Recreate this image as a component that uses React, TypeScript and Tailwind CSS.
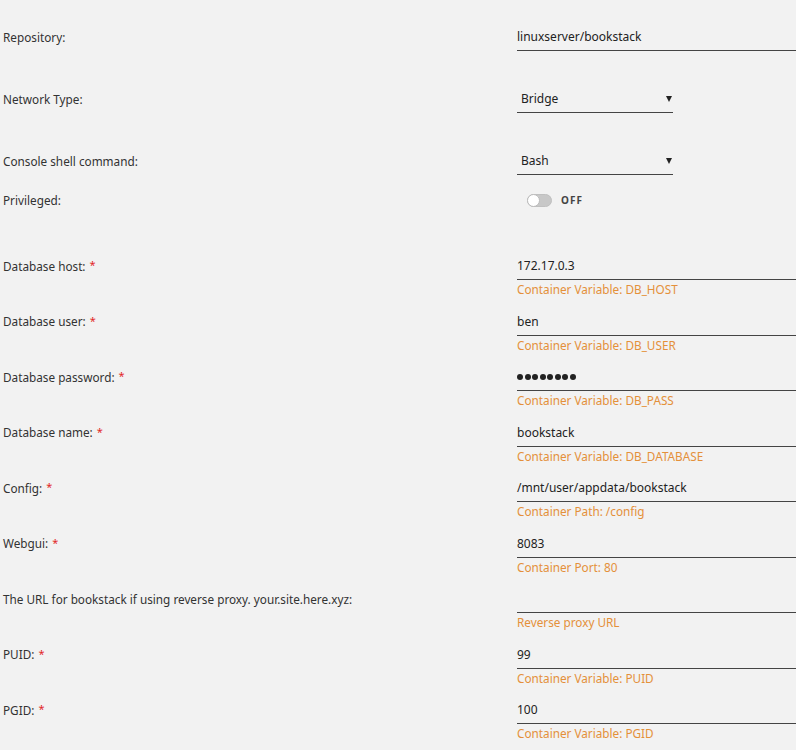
import React from "react";

type Field = {
  label: string;
  required?: boolean;
  value: string;
  hint: string;
  password?: boolean;
};

const fields: Field[] = [
  { label: "Database host:", required: true, value: "172.17.0.3", hint: "Container Variable: DB_HOST" },
  { label: "Database user:", required: true, value: "ben", hint: "Container Variable: DB_USER" },
  { label: "Database password:", required: true, value: "", hint: "Container Variable: DB_PASS", password: true },
  { label: "Database name:", required: true, value: "bookstack", hint: "Container Variable: DB_DATABASE" },
  { label: "Config:", required: true, value: "/mnt/user/appdata/bookstack", hint: "Container Path: /config" },
  { label: "Webgui:", required: true, value: "8083", hint: "Container Port: 80" },
  { label: "The URL for bookstack if using reverse proxy. your.site.here.xyz:", value: "", hint: "Reverse proxy URL" },
  { label: "PUID:", required: true, value: "99", hint: "Container Variable: PUID" },
  { label: "PGID:", required: true, value: "100", hint: "Container Variable: PGID" },
];

function Label({ text, required }: { text: string; required?: boolean }) {
  return (
    <div className="w-[517px] shrink-0 pl-[3px] h-[27px] flex items-center text-[11.75px] text-[#333]">
      <span>{text}</span>
      {required && <span className="text-[#e22828] ml-[4px] text-[11px] -translate-y-[1px]">*</span>}
    </div>
  );
}

function Select({ value }: { value: string }) {
  return (
    <div className="w-[156px] h-[27px] border-b border-[#444] flex items-center justify-between pl-[4px] text-[12px] text-[#222]">
      <span>{value}</span>
      <svg width="6" height="6" viewBox="0 0 6 6" className="mr-[1px]">
        <polygon points="0,0 6,0 3,6" fill="#222" />
      </svg>
    </div>
  );
}

export default function App() {
  return (
    <div
      className="w-[796px] h-[750px] overflow-hidden bg-[#f2f2f2] pt-[24px]"
      style={{ fontFamily: '"Noto Sans", "Open Sans", sans-serif' }}
    >
      <div className="flex h-[62px]">
        <Label text="Repository:" />
        <div className="flex-1 h-[27px] border-b border-[#444] flex items-center text-[12px] text-[#222]">
          linuxserver/bookstack
        </div>
      </div>
      <div className="flex h-[62px]">
        <Label text="Network Type:" />
        <Select value="Bridge" />
      </div>
      <div className="flex h-[39px]">
        <Label text="Console shell command:" />
        <Select value="Bash" />
      </div>
      <div className="flex h-[66px]">
        <Label text="Privileged:" />
        <div className="h-[27px] flex items-center pl-[10px] gap-[9px]">
          <div className="w-[25px] h-[13px] rounded-full bg-[#c8c8c8] relative border border-[#c0c0c0]">
            <div className="absolute left-[-1px] top-[-1px] w-[13px] h-[13px] rounded-full bg-white border border-[#bbb]" />
          </div>
          <span className="text-[10px] font-bold tracking-[1px] text-[#444]">OFF</span>
        </div>
      </div>
      {fields.map((f) => (
        <div key={f.hint} className="flex h-[55.5px]">
          <Label text={f.label} required={f.required} />
          <div className="flex-1 flex flex-col">
            <div className="h-[27px] border-b border-[#444] flex items-center text-[12px] text-[#222]">
              {f.password ? (
                <div className="flex gap-[1.5px]">
                  {Array.from({ length: 8 }).map((_, i) => (
                    <span key={i} className="w-[6px] h-[6px] rounded-full bg-[#222]" />
                  ))}
                </div>
              ) : (
                f.value
              )}
            </div>
            <div className="text-[11.75px] leading-[18px] text-[#e4903a]">{f.hint}</div>
          </div>
        </div>
      ))}
    </div>
  );
}
